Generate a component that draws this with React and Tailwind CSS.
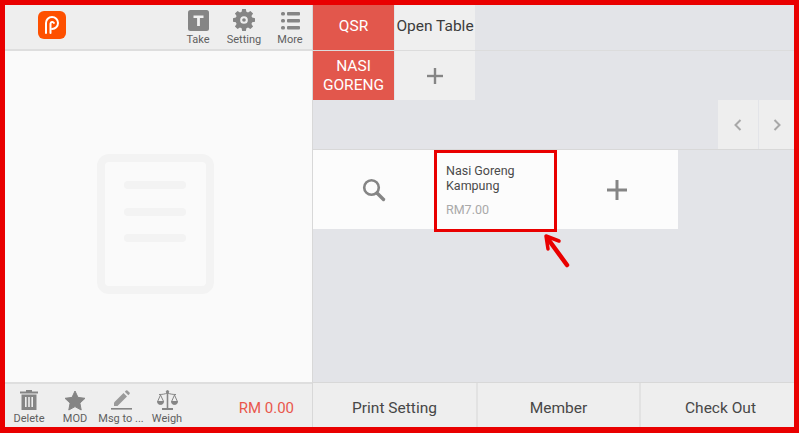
import React from 'react';

const font = { fontFamily: 'Roboto, sans-serif' };

function Logo() {
  return (
    <svg width="28" height="28" viewBox="0 0 28 28">
      <rect width="28" height="28" rx="6" fill="#fe5000" />
      <path d="M8 22V12a6 6 0 1 1 6 6" fill="none" stroke="#fff" strokeWidth="2" strokeLinecap="round" />
      <path d="M12.500 22V12.500a1.800 1.800 0 0 1 3.400-.6" fill="none" stroke="#fff" strokeWidth="2" strokeLinecap="round" />
    </svg>
  );
}

function TakeIcon() {
  return (
    <svg width="21" height="21" viewBox="0 0 21 21">
      <rect width="21" height="21" rx="2.500" fill="#858585" />
      <path d="M5.500 5.500h10v2.400h-3.600V16H9.100V7.900H5.500z" fill="#f1f1f1" />
    </svg>
  );
}

function GearIcon() {
  return (
    <svg width="22" height="22" viewBox="0 0 24 24">
      <path
        fill="#858585"
        fillRule="evenodd"
        d="M10 0h4l.6 3.100 1.800.8L19 2.100 21.900 5l-1.800 2.600.8 1.800 3.100.6v4l-3.100.5-.8 1.800 1.800 2.700L19 21.900l-2.600-1.800-1.800.8L14 24h-4l-.6-3.100-1.800-.8L5 21.900 2.100 19l1.800-2.700-.8-1.800L0 14v-4l3.100-.6.8-1.800L2.100 5 5 2.100l2.600 1.800 1.800-.8zM12 7.800a4.200 4.200 0 1 0 0 8.400 4.200 4.200 0 0 0 0-8.400z"
      />
      <circle cx="12" cy="12" r="2" fill="#858585" />
    </svg>
  );
}

function MoreIcon() {
  return (
    <svg width="19" height="19" viewBox="0 0 19 19" fill="#858585">
      <rect x="0" y="1" width="4" height="3.400" rx="1.500" />
      <rect x="6" y="1" width="13" height="3.400" rx="1" />
      <rect x="0" y="8" width="4" height="3.400" rx="1.500" />
      <rect x="6" y="8" width="13" height="3.400" rx="1" />
      <rect x="0" y="15" width="4" height="3.400" rx="1.500" />
      <rect x="6" y="15" width="13" height="3.400" rx="1" />
    </svg>
  );
}

function TrashIcon() {
  return (
    <svg width="18" height="20" viewBox="0 0 18 20" fill="#858585">
      <path d="M6 0h6v1.500h6V3.500H0V1.500h6z" />
      <path fillRule="evenodd" d="M1.500 4.500h15V20h-15zM5 7v10h1.600V7zM8.200 7v10h1.600V7zM11.400 7v10H13V7z" />
    </svg>
  );
}

function StarIcon() {
  return (
    <svg width="22" height="21" viewBox="0 0 22 21">
      <path
        d="M11 1l3 6.400 7 .9-5.100 4.800 1.300 6.900L11 16.600 4.800 20l1.300-6.900L1 8.300l7-.9z"
        fill="#858585"
        stroke="#858585"
        strokeLinejoin="round"
      />
    </svg>
  );
}

function PenIcon() {
  return (
    <svg width="21" height="20" viewBox="0 0 21 20" fill="#9a9a9a">
      <path d="M3 12.500L12.500 3l3.500 3.500L6.500 16H3z" />
      <path d="M13.800 1.700L15 .5a1 1 0 0 1 1.400 0l2.100 2.100a1 1 0 0 1 0 1.400l-1.200 1.200z" />
      <rect x="0" y="18" width="21" height="1.600" fill="#858585" />
    </svg>
  );
}

function ScaleIcon() {
  return (
    <svg width="21" height="21" viewBox="0 0 21 21" fill="none" stroke="#858585" strokeWidth="1">
      <circle cx="10.500" cy="1.800" r="1.200" fill="#858585" />
      <path d="M10.500 2.500V18.500" strokeWidth="1.600" />
      <path d="M2 4.500c3 0 5.500-.3 8.500-1.500 3 1.200 5.500 1.500 8.500 1.500" />
      <path d="M3.500 5L.6 11.500h6zM17.500 5l-2.900 6.500h5.800z" />
      <path d="M.5 11.500a3 3 0 0 0 6 0zM14.500 11.500a3 3 0 0 0 6 0z" fill="#858585" />
      <path d="M5 19h11" strokeWidth="2" />
    </svg>
  );
}

function Plus({ size }) {
  return (
    <svg width={size} height={size} viewBox="0 0 20 20" fill="#858585">
      <rect x="8.500" y="0" width="3" height="20" />
      <rect x="0" y="8.500" width="20" height="3" />
    </svg>
  );
}

function ToolItem({ icon, label, className, labelClass }) {
  return (
    <div className={`flex flex-col items-center ${className}`}>
      <div className="h-[22px] flex items-center justify-center">{icon}</div>
      <span className={`text-[11px] leading-[14px] text-[#5f5f5f] whitespace-nowrap ${labelClass}`}>{label}</span>
    </div>
  );
}

export default function App() {
  return (
    <div className="w-[799px] h-[433px] overflow-hidden relative border-t-[5px] border-l-[5px] border-r-[5px] border-b-[6px] border-[#e90000] flex bg-[#e3e4e8]" style={font}>
      {/* left column */}
      <div className="w-[308px] shrink-0 flex flex-col border-r border-[#d8d8d8] bg-[#fafafa]">
        <div className="h-[46px] shrink-0 flex items-start bg-[#eeeeee] border-b-2 border-[#dedede]">
          <div className="ml-[33px] mt-[6px]">
            <Logo />
          </div>
          <div className="flex ml-auto mr-[4px] pt-[4px] items-start">
            <ToolItem icon={<TakeIcon />} label="Take" className="w-[36px]" labelClass="mt-[2px]" />
            <ToolItem icon={<GearIcon />} label="Setting" className="w-[56px]" labelClass="mt-[2px]" />
            <ToolItem icon={<MoreIcon />} label="More" className="w-[36px]" labelClass="mt-[2px]" />
          </div>
        </div>

        <div className="flex-1 flex items-center justify-center pt-[15px] pr-[6px]">
          <svg width="117" height="140" viewBox="0 0 117 140">
            <rect x="4" y="4" width="109" height="132" rx="8" fill="none" stroke="#f3f3f3" strokeWidth="8" />
            <rect x="27" y="27" width="62" height="8" rx="4" fill="#f3f3f3" />
            <rect x="27" y="54" width="62" height="8" rx="4" fill="#f3f3f3" />
            <rect x="27" y="80" width="62" height="8" rx="4" fill="#f3f3f3" />
          </svg>
        </div>

        <div className="h-[45px] shrink-0 flex items-start bg-[#eeeeee] border-t-2 border-[#dedede]">
          <div className="flex pt-[5px] pl-px">
            <ToolItem icon={<TrashIcon />} label="Delete" className="w-[46px]" labelClass="mt-[1px]" />
            <ToolItem icon={<StarIcon />} label="MOD" className="w-[46px]" labelClass="mt-[1px]" />
            <ToolItem icon={<PenIcon />} label="Msg to ..." className="w-[46px]" labelClass="mt-[1px]" />
            <ToolItem icon={<ScaleIcon />} label="Weigh" className="w-[46px]" labelClass="mt-[1px]" />
          </div>
          <span className="ml-auto mr-[18px] mt-[15px] text-[15px] leading-[18px] text-[#e9574c]">RM 0.00</span>
        </div>
      </div>

      {/* right column */}
      <div className="flex-1 min-w-0 flex flex-col">
        <div className="flex h-[46px] shrink-0 border-b border-[#dcdcdc]">
          <div className="w-[81px] pb-[2px] bg-[#e2574c] text-white text-[15.5px] flex items-center justify-center">QSR</div>
          <div className="w-[80px] pb-[2px] ml-px bg-[#efefef] text-[#3c3c3c] text-[15.5px] flex items-center justify-center whitespace-nowrap">Open Table</div>
        </div>

        <div className="flex h-[49px] shrink-0">
          <div className="w-[81px] bg-[#e2574c] text-white text-[15.5px] leading-[19px] flex items-center justify-center text-center">
            NASI<br />GORENG
          </div>
          <div className="w-[80px] ml-px bg-[#efefef] flex items-center justify-center">
            <Plus size={16} />
          </div>
        </div>

        <div className="flex h-[50px] shrink-0 justify-end border-b border-[#d8d8d8]">
          <div className="w-[40px] bg-[#eeeeee] flex items-center justify-center">
            <svg width="8" height="12" viewBox="0 0 8 12" fill="none" stroke="#a8a8a8" strokeWidth="2"><path d="M6.500 1L1.500 6l5 5" /></svg>
          </div>
          <div className="w-[35px] ml-px bg-[#eeeeee] flex items-center justify-center">
            <svg width="8" height="12" viewBox="0 0 8 12" fill="none" stroke="#a8a8a8" strokeWidth="2"><path d="M1.500 1l5 5-5 5" /></svg>
          </div>
        </div>

        <div className="flex h-[79px] w-[365px] shrink-0 bg-[#fcfcfc]">
          <div className="w-[121px] flex items-center justify-center">
            <svg width="24" height="24" viewBox="0 0 24 24" fill="none" stroke="#858585">
              <circle cx="9.500" cy="9.500" r="7.300" strokeWidth="2.600" />
              <path d="M15 15l6.500 6.500" strokeWidth="3.400" strokeLinecap="round" />
            </svg>
          </div>
          <div className="w-[123px] h-[82px] border-[3px] border-[#e90000] pl-[9px] pt-[10px] text-[#4a4a4a]">
            <div className="text-[12.500px] leading-[15px]">Nasi Goreng<br />Kampung</div>
            <div className="text-[12.500px] leading-[15px] mt-[9px] text-[#a9a9a9]">RM7.00</div>
          </div>
          <div className="w-[121px] pr-[2px] flex items-center justify-center">
            <Plus size={20} />
          </div>
        </div>

        <div className="flex-1" />

        <div className="h-[45px] shrink-0 flex bg-[#eeeeee] border-t border-[#d8d8d8] text-[15.500px] text-[#474747]">
          <div className="w-[163px] pt-[8px] flex items-center justify-center">Print Setting</div>
          <div className="w-[163px] pt-[8px] border-l-2 border-[#e2e2e2] flex items-center justify-center">Member</div>
          <div className="flex-1 pt-[8px] pl-[6px] border-l-2 border-[#e2e2e2] flex items-center justify-center">Check Out</div>
        </div>
      </div>

      {/* annotation arrow */}
      <svg className="absolute left-[535px] top-[225px]" width="32" height="40" viewBox="0 0 32 40" fill="none" stroke="#e90000" strokeLinecap="round" strokeLinejoin="round">
        <path d="M27 35L8 9" strokeWidth="4.500" />
        <path d="M8 19L6 6l13 5" strokeWidth="3.500" />
      </svg>
    </div>
  );
}
